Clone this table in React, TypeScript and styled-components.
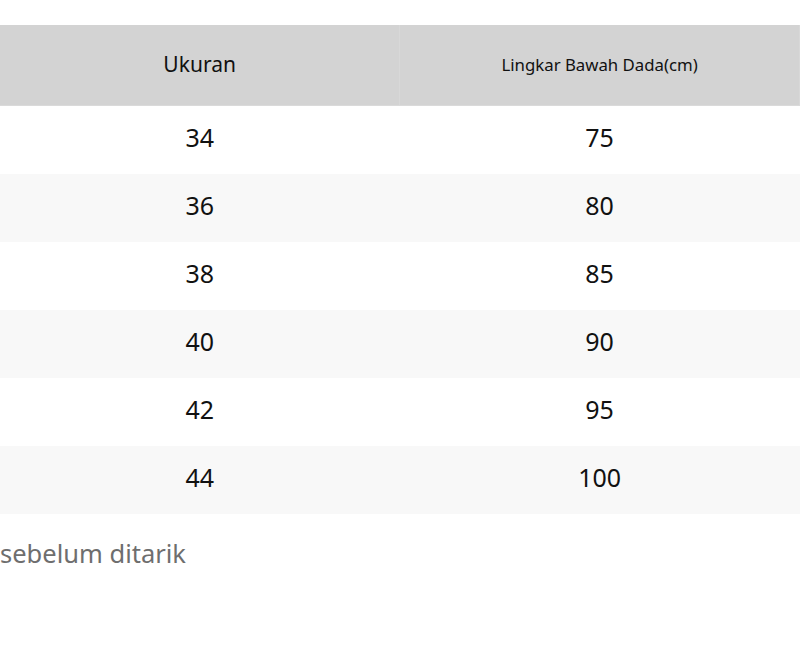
import React from "react";
import styled, { createGlobalStyle } from "styled-components";

const Global = createGlobalStyle`
  html, body { margin: 0; padding: 0; background: #fff; }
  body { font-family: "Noto Sans", "Open Sans", sans-serif; }
`;

const Page = styled.div`
  width: 800px;
  padding-top: 25px;
`;

const Table = styled.table`
  width: 800px;
  border-collapse: collapse;
  table-layout: fixed;
`;

const HeadCell = styled.th<{ $small?: boolean }>`
  height: 78px;
  padding: 0 0 2px;
  background: #d3d3d3;
  color: #111;
  font-weight: 400;
  font-size: ${(p) => (p.$small ? "16.8px" : "21px")};
  text-align: center;
  border-right: 1px solid #d8d8d8;
  border-bottom: 1px solid #dadada;
`;

const Row = styled.tr<{ $odd: boolean }>`
  background: ${(p) => (p.$odd ? "#f8f8f8" : "#ffffff")};
`;

const Cell = styled.td`
  height: 62px;
  padding: 0 0 6px;
  text-align: center;
  font-size: 25px;
  color: #111;
`;

const Note = styled.p`
  margin: 22px 0 0;
  font-size: 25.5px;
  color: #6e6e6e;
`;

const rows = [
  ["34", "75"],
  ["36", "80"],
  ["38", "85"],
  ["40", "90"],
  ["42", "95"],
  ["44", "100"],
];

export default function App() {
  return (
    <>
      <Global />
      <Page>
        <Table>
          <thead>
            <tr>
              <HeadCell>Ukuran</HeadCell>
              <HeadCell $small>Lingkar Bawah Dada(cm)</HeadCell>
            </tr>
          </thead>
          <tbody>
            {rows.map((r, i) => (
              <Row key={r[0]} $odd={i % 2 === 1}>
                <Cell>{r[0]}</Cell>
                <Cell>{r[1]}</Cell>
              </Row>
            ))}
          </tbody>
        </Table>
        <Note>sebelum ditarik</Note>
      </Page>
    </>
  );
}
